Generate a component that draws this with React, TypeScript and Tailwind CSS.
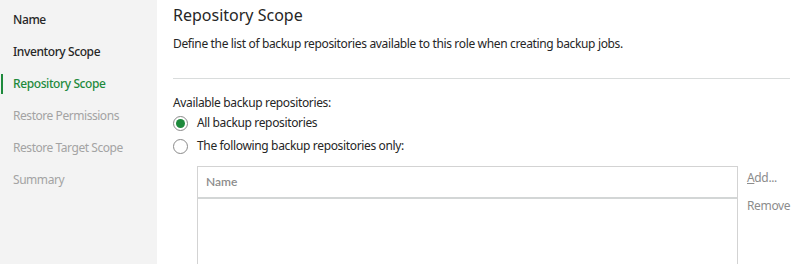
import React from "react";

const font = { fontFamily: '"Segoe UI", "Noto Sans", "Open Sans", sans-serif' };

export default function App() {
  const steps = [
    { label: "Name", state: "done" },
    { label: "Inventory Scope", state: "done" },
    { label: "Repository Scope", state: "active" },
    { label: "Restore Permissions", state: "todo" },
    { label: "Restore Target Scope", state: "todo" },
    { label: "Summary", state: "todo" },
  ];
  return (
    <div className="flex h-[264px] w-[796px] overflow-hidden bg-white text-[12px] tracking-[-0.35px] text-[#262626]" style={font}>
      <div className="flex w-[157px] shrink-0 flex-col bg-[#f3f3f3] pt-[4px]">
        {steps.map((s) => (
          <div key={s.label} className="relative flex h-[32px] items-center pl-[13px]">
            {s.state === "active" && <div className="absolute left-[1px] top-[6px] h-[20px] w-[2px] bg-[#1e8a3c]" />}
            <span
              className={
                s.state === "active"
                  ? "font-medium tracking-[-0.4px] text-[#1e8a3c]"
                  : s.state === "done"
                  ? "font-medium tracking-[-0.4px] text-[#262626]"
                  : "tracking-[-0.45px] text-[#a3a3a3]"
              }
            >
              {s.label}
            </span>
          </div>
        ))}
      </div>
      <div className="flex flex-1 flex-col pl-[16px] pr-[8px]">
        <div className="mt-[3px] text-[16px] leading-[24px] tracking-normal text-[#262626]">Repository Scope</div>
        <div className="mt-[9px] leading-[16px]">Define the list of backup repositories available to this role when creating backup jobs.</div>
        <div className="mt-[26px] h-px bg-[#d9dcdc]" />
        <div className="mt-[16px] leading-[16px]">Available backup repositories:</div>
        <div className="mt-[2px] flex h-[20px] items-center gap-[9px]">
          <div className="flex h-[15px] w-[15px] items-center justify-center rounded-full border border-[#8a8a8a]">
            <div className="h-[9px] w-[9px] rounded-full bg-[#1e8a3c]" />
          </div>
          <span>All backup repositories</span>
        </div>
        <div className="mt-[3px] flex h-[20px] items-center gap-[9px]">
          <div className="h-[15px] w-[15px] rounded-full border border-[#8a8a8a]" />
          <span>The following backup repositories only:</span>
        </div>
        <div className="mt-[10px] flex flex-1 pl-[24px]">
          <div className="flex w-[541px] flex-col border border-b-0 border-[#d3d3d3]">
            <div className="flex h-[32px] items-center border-b-2 border-[#d3d6d6] pl-[8px] font-semibold tracking-normal text-[#8c8c8c]" style={{ fontFamily: 'Lato, "Noto Sans", sans-serif' }}>
              Name
            </div>
            <div className="flex-1" />
          </div>
          <div className="ml-[9px] flex flex-col pt-[4px] text-[#8c8c8c]">
            <div className="leading-[16px]"><span className="underline">A</span>dd...</div>
            <div className="mt-[12px] leading-[16px]">Remove</div>
          </div>
        </div>
      </div>
    </div>
  );
}
